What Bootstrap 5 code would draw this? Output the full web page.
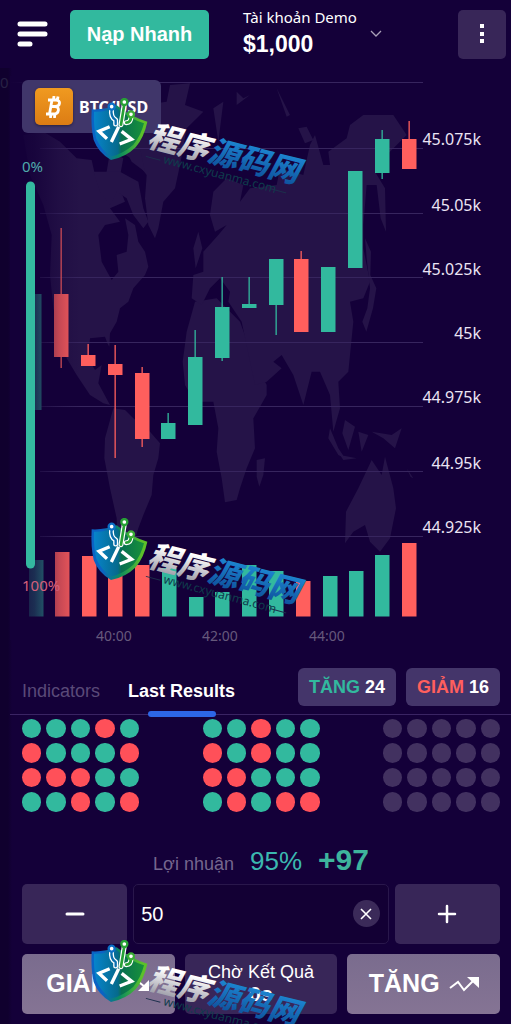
<!DOCTYPE html>
<html lang="vi" data-bs-theme="dark">
<head>
<meta charset="utf-8">
<meta name="viewport" content="width=device-width, initial-scale=1">
<title>BTC/USD</title>
<link href="https://cdn.jsdelivr.net/npm/bootstrap@5.3.0/dist/css/bootstrap.min.css" rel="stylesheet">
<style>
  :root { --up:#32b99e; --down:#ff5f5d; --ink:#140039; --panel:#382658; --edge:#10002e; }
  body { background:var(--ink); color:#fff; font-family:"Liberation Sans",Arial,sans-serif; }
  .trade-page { position:relative; overflow:hidden; }
  .top-bar { height:68px; padding:0 5px 0 17px; }
  .menu-btn { width:32px; }
  .deposit-btn { width:139px; height:49px; margin-left:21px; background:var(--up); font-size:20px; border-radius:5px; }
  .account-btn { width:139px; margin-left:34px; }
  .account-name { font:15px/20px "Noto Sans",sans-serif; }
  .account-sum { font-size:23px; line-height:34px; }
  .more-btn { width:48px; height:49px; background:var(--panel); border-radius:5px; }
  .work-area { background:linear-gradient(90deg,var(--edge) 8px,var(--ink) 12px); }
  .chart-svg { display:block; width:100%; height:auto; }
  .axis-y { font:16px "Noto Sans",sans-serif; fill:#ebe4f4; text-anchor:end; }
  .axis-x { font:14px "Noto Sans",sans-serif; fill:#66597c; text-anchor:middle; }
  .gauge-text { font:15px "Noto Sans",sans-serif; }
  .asset-chip { top:12px; left:22px; width:139px; height:53px; padding:0 13px; gap:6px; background:#40366a; border-radius:6px; font:bold 16px "Noto Sans",sans-serif; }
  .coin { width:38px; height:37px; border-radius:5px; background:linear-gradient(#f09a20,#dc7c14); box-shadow:0 1px 3px #0006; }
  .tab-row { padding:8px 11px 0 12px; margin-left:10px; height:55px; border-bottom:1px solid #3a2463; font-size:18px; }
  .tab-link { color:#5a4a78; text-decoration:none; line-height:46px; }
  .tab-link.active { color:#fff; font-weight:bold; position:relative; margin-left:28px; }
  .tab-link.active::after { content:""; position:absolute; left:20px; right:19px; bottom:-3px; height:6px; border-radius:3px; background:#2d66e6; }
  .tally { height:38px; padding:0 11px; background:#44356a; border-radius:6px; font-weight:bold; }
  .tally + .tally { margin-left:10px; }
  .text-up { color:var(--up); } .text-down { color:var(--down); }
  .inner { padding:0 11px 0 22px; }
  .result-set { display:grid; grid-template-columns:repeat(5,1fr); gap:5px; width:117px; }
  .result-set i { aspect-ratio:1; border-radius:50%; background:#423160; }
  .result-set .u { background:var(--up); } .result-set .d { background:#ff5059; }
  .profit-row { margin-top:25px; height:40px; }
  .profit-label { font-size:18px; color:#75678e; }
  .profit-rate { font-size:26px; color:#3bb8b0; }
  .profit-sum { font-size:30px; color:#3eb49c; font-weight:bold; }
  .stake-row { gap:6px; margin-top:7px; }
  .step-btn { flex:108 1 0; height:60px; background:var(--panel); border-radius:5px; }
  .stake-box { flex:252 1 0; height:60px; border:1px solid #29174b; border-radius:5px; background:#130034; padding-right:8px; }
  .stake-input { font-size:20px; padding:0 0 0 7px; color:#fff; }
  .clear-btn { width:27px; height:27px; background:#3b2a59; }
  .order-row { gap:10px; margin-top:10px; padding-bottom:10px; }
  .order-row > * { flex:1 1 0; height:60px; border-radius:5px; }
  .order-btn { background:linear-gradient(#7a6c8e,#857494); font-size:25px; gap:9px; }
  .wait-box { background:var(--panel); font-size:18px; line-height:20px; }
  .wait-box strong { font-size:21px; line-height:24px; }
  .stamp-layer { inset:0; overflow:hidden; pointer-events:none; z-index:5; }
  .stamp { position:absolute; left:90px; width:220px; height:100px; }
  .stamp-a { top:98px; } .stamp-b { top:518px; } .stamp-c { top:940px; }
  .stamp-name { font:italic 900 31px "Noto Sans CJK SC",sans-serif; }
  .stamp-url { font:12px "Noto Sans",sans-serif; fill:#0f3c4c; }
</style>
</head>
<body>
<div class="trade-page">
  <header class="top-bar d-flex align-items-center">
    <button class="btn border-0 p-0 menu-btn d-flex" aria-label="Menu">
      <svg width="32" height="26" stroke="#fff" stroke-width="5" stroke-linecap="round"><path d="M3 3H28M3 13H28M3 23H13"/></svg>
    </button>
    <button class="btn border-0 p-0 deposit-btn text-white fw-bold">Nạp Nhanh</button>
    <button class="btn border-0 p-0 account-btn d-flex align-items-center justify-content-between text-start text-white">
      <span><span class="account-name d-block">Tài khoản Demo</span><strong class="account-sum d-block">$1,000</strong></span>
      <svg width="12" height="8" fill="none" stroke="#aaa0b8" stroke-width="1.3"><path d="M1 1L6 6L11 1"/></svg>
    </button>
    <button class="btn border-0 p-0 more-btn ms-auto d-flex align-items-center justify-content-center" aria-label="More">
      <svg width="4" height="20" fill="#fff"><path d="M0 0h4v4h-4zM0 8h4v4h-4zM0 15h4v4h-4z"/></svg>
    </button>
  </header>

  <main class="work-area">
    <section class="position-relative">
      <svg class="chart-svg" viewBox="0 68 511 592" role="img" aria-label="BTC/USD">
        <defs>
          <linearGradient id="fade" gradientUnits="userSpaceOnUse" x1="10" x2="80" y1="0" y2="0">
            <stop offset="0" stop-color="#140039"/><stop offset=".35" stop-color="#140039" stop-opacity=".75"/>
            <stop offset=".7" stop-color="#140039" stop-opacity=".25"/><stop offset="1" stop-color="#140039" stop-opacity="0"/>
          </linearGradient>
        </defs>
        <g fill="#251348" transform="translate(10 75) scale(.33333)">
          <path d="M40 180L100 170 150 200 200 250 245 255 255 300 290 290 300 230 340 250 325 330 345 380 300 400 330 440 285 450 265 480 275 560 305 615 325 590 320 540 350 530 355 480 345 430 375 450 385 500 405 530 415 575 405 600 370 640 355 680 330 700 320 740 300 775 298 815 292 805 285 785 240 790 235 850 255 885 275 870 265 925 300 990 280 985 240 960 200 900 170 850 150 780 130 700 120 600 125 480 100 390 60 300Z"/>
          <path d="M385 150L400 90 470 80 480 30 540 25 525 90 580 110 530 160 510 270 495 340 460 380 445 460 435 490 415 450 405 370 410 300 380 260 330 230Z"/>
          <path d="M250 290L330 290 385 320 400 400 415 440 400 460 370 420 350 370 320 350 300 390 270 350ZM340 210l50 10 15 70-40-30z"/>
          <path d="M310 1000L345 1005 370 1030 420 1070 450 1105 445 1150 430 1200 425 1260 400 1320 385 1360 370 1410 340 1500 325 1450 320 1330 300 1240 283 1150 285 1090Z"/>
          <path d="M555 680L620 670 690 740 730 850 770 930 770 960 730 1030 735 1120 710 1180 690 1240 680 1275 645 1282 635 1210 620 1130 625 1060 610 980 555 980 525 930 518 860 530 770Z"/>
          <path d="M740 1155l25-5-5 50-12 35-8-30z"/>
          <path d="M545 670L550 600 580 590 580 530 625 480 650 450 615 470 600 420 610 350 650 310 700 330 690 380 720 340 800 330 810 280 880 300 900 210 915 180 940 270 960 270 955 230 1010 190 1020 150 1060 120 1150 120 1190 180 1160 210 1130 240 1095 290 1125 340 1128 470 1112 430 1100 330 1070 330 1060 450 1060 520 1080 620 1060 670 1020 680 1030 740 1015 890 985 920 990 1000 970 1070 960 960 930 890 905 890 880 990 850 900 815 840 790 860 815 880 770 920 735 930 695 740 655 680 660 650 630 610 600 640 575 690Z"/>
          <path d="M550 520l15-50 12 50-20 60zM1065 490l18 40-2 70 18 40-10 60-20 70-12-30 15-40 8-60-10-90zM610 100l30-20-15 120zM680 50l20 20 20-10-40 30zM800 40l40 80-10 5zM865 160l25-5 20 40-25 10z"/>
          <path d="M1085 1155L1115 1200 1125 1145 1150 1240 1158 1300 1140 1390 1110 1430 1080 1400 1065 1350 1030 1370 1005 1405 1008 1310 1045 1240Z"/>
          <path d="M960 1060l25 60 20 30-20-10-30-50zM1005 1035l30 20-20 70-18-50zM1045 1070l30 10-20 50zM1085 1070l60 10 30-20-20 60-35-30zM990 1140l50 10-40 5zM1190 1180l20 30-8-4z"/>
        </g>
        <path stroke="#37255e" stroke-width="1" d="M10 82.5H423M40 148.500H423M40 213.500H423M40 277.500H423M40 342.500H423M40 406.500H423M40 471.500H423M40 536.500H423"/>
        <g id="bars"></g>
        <path fill="url(#fade)" d="M10 76H80V640H10Z"/>
        <g class="axis-y">
          <text x="481" y="145">45.075k</text><text x="481" y="211">45.05k</text><text x="481" y="275">45.025k</text>
          <text x="481" y="339">45k</text><text x="481" y="403">44.975k</text><text x="481" y="469">44.95k</text><text x="481" y="533">44.925k</text>
        </g>
        <g class="axis-x"><text x="114" y="641">40:00</text><text x="220" y="641">42:00</text><text x="327" y="641">44:00</text></g>
        <g class="gauge-text"><text x="22" y="172" fill="#4fa9ab">0%</text><text x="22" y="591" fill="#d4607c">100%</text><text x="0" y="88" fill="#272044">0</text></g>
        <path stroke="#34b9a0" stroke-width="9" stroke-linecap="round" d="M30.500 186V564"/>
      </svg>
      <button class="btn border-0 asset-chip position-absolute d-flex align-items-center text-white">
        <span class="coin d-flex flex-shrink-0 align-items-center justify-content-center">
          <svg width="18" height="22" viewBox="0 0 18 22" fill="none" stroke="#fff" stroke-width="2.800"><path d="M3 4H7L4.500 18H1M6 4h5c5 0 4.500 6-.5 6.500H6M10 10.500c5 0 4.500 7.500-1.500 7.500H3.500M9 0l-.6 4M13 .5l-.6 4M6 18l-.6 4M10 18l-.6 4"/></svg>
        </span>BTC/USD
      </button>
    </section>

    <nav class="tab-row d-flex align-items-start">
      <a class="tab-link" href="#">Indicators</a>
      <a class="tab-link active" href="#">Last Results</a>
      <span class="tally ms-auto d-flex align-items-center"><span><span class="text-up">TĂNG</span> 24</span></span>
      <span class="tally d-flex align-items-center"><span><span class="text-down">GIẢM</span> 16</span></span>
    </nav>

    <div class="inner">
      <div class="d-flex justify-content-between pt-1" id="results"></div>

      <div class="profit-row d-flex align-items-baseline justify-content-center">
        <span class="profit-label">Lợi nhuận</span>
        <span class="profit-rate ms-3">95%</span>
        <span class="profit-sum ms-3">+97</span>
      </div>

      <div class="stake-row d-flex">
        <button class="btn border-0 p-0 step-btn" aria-label="Giảm 1"><svg width="20" height="20" stroke="#fff" stroke-width="3" stroke-linecap="round"><path d="M2 10H18"/></svg></button>
        <div class="stake-box d-flex align-items-center">
          <input class="form-control border-0 bg-transparent shadow-none stake-input" type="text" value="50" aria-label="50">
          <button class="btn border-0 p-0 rounded-circle clear-btn d-flex align-items-center justify-content-center flex-shrink-0" aria-label="Xóa"><svg width="12" height="12" stroke="#fff" stroke-width="1.600"><path d="M1 1L11 11M11 1L1 11"/></svg></button>
        </div>
        <button class="btn border-0 p-0 step-btn" aria-label="Thêm 1"><svg width="20" height="20" stroke="#fff" stroke-width="2.500" stroke-linecap="round"><path d="M2 10H18M10 2V18"/></svg></button>
      </div>

      <div class="order-row d-flex">
        <button class="btn border-0 p-0 order-btn d-flex align-items-center justify-content-center text-white fw-bold">GIẢM
          <svg width="30" height="16" fill="none" stroke="#fff" stroke-width="2"><path d="M1 5L9 11L15 3L25 11"/><path fill="#fff" stroke="none" d="M29 15H18L29 4Z"/></svg></button>
        <div class="wait-box d-flex flex-column align-items-center justify-content-center"><span>Chờ Kết Quả</span><strong>0s</strong></div>
        <button class="btn border-0 p-0 order-btn d-flex align-items-center justify-content-center text-white fw-bold">TĂNG
          <svg width="30" height="16" fill="none" stroke="#fff" stroke-width="2"><path d="M1 12L9 6L15 14L25 4"/><path fill="#fff" stroke="none" d="M18 1H30V12Z"/></svg></button>
      </div>
    </div>
  </main>

  <div class="stamp-layer position-absolute" id="stamps"></div>
</div>

<svg width="0" height="0" class="position-absolute" aria-hidden="true">
  <defs>
    <linearGradient id="shieldRim" x1="0" x2="1"><stop offset=".2" stop-color="#0b63c4"/><stop offset=".5" stop-color="#0a8a60"/><stop offset=".9" stop-color="#5cc02a"/></linearGradient>
    <linearGradient id="shieldFace" x1="0" x2="1"><stop stop-color="#0784cc"/><stop offset=".48" stop-color="#066a8c"/><stop offset=".55" stop-color="#087050"/><stop offset="1" stop-color="#17913a"/></linearGradient>
    <linearGradient id="silver" x1="0" x2="0" y1="0" y2="1"><stop offset=".3" stop-color="#fff"/><stop offset=".9" stop-color="#9a9aa6"/></linearGradient>
    <linearGradient id="azure" x1="0" x2="0" y1="0" y2="1"><stop offset=".2" stop-color="#1d86d2"/><stop offset="1" stop-color="#0c4a94"/></linearGradient>
  </defs>
</svg>
<template id="stampArt">
  <svg class="stamp" viewBox="0 0 220 100">
    <g transform="translate(-5 -8) scale(.33333)" fill="none" stroke-linecap="round" stroke-linejoin="round">
      <path fill="url(#shieldRim)" d="M20 58Q60 60 95 46Q140 82 187 95Q178 140 152 172Q122 202 78 210Q40 188 26 150Q17 110 20 58Z"/>
      <path fill="url(#shieldFace)" d="M27 65Q62 66 94 54Q135 87 177 100Q168 136 145 164Q116 190 80 199Q48 180 34 146Q25 110 27 65Z"/>
      <path stroke="#fff" stroke-width="15" d="M80 55Q76 82 92 90V102M118 42L108 104M138 78Q138 98 124 98"/>
      <path stroke="#0a6fb0" stroke-width="7" d="M80 55Q76 82 92 90V102"/>
      <path stroke="#27a035" stroke-width="8" d="M118 42L108 104M138 78Q138 98 124 98"/>
      <circle cx="80" cy="50" r="9" fill="#fff" stroke="#0b6fc6" stroke-width="7"/>
      <circle cx="118" cy="36" r="9" fill="#fff" stroke="#27a035" stroke-width="7"/>
      <circle cx="138" cy="73" r="9" fill="#fff" stroke="#3aad35" stroke-width="7"/>
      <path stroke="#fff" stroke-width="10" stroke-linecap="butt" stroke-linejoin="miter" d="M74 110L42 124L66 146M101 110L79 156M110 124L140 148L104 162"/>
    </g>
    <g transform="rotate(14 57 48)" class="stamp-name"><text x="56" y="48" fill="url(#silver)">程序</text><text x="118" y="48" fill="url(#azure)">源码网</text></g>
    <g transform="rotate(15 73 64)"><text class="stamp-url" x="73" y="65">www.cxyuanma.com</text><path stroke="#1d2f4c" d="M55 63H70M184 62H200"/></g>
  </svg>
</template>

<script src="https://cdn.jsdelivr.net/npm/bootstrap@5.3.0/dist/js/bootstrap.bundle.min.js"></script>
<script>
  // candle: left, direction, body top, body bottom, wick top, wick bottom
  const candles = [
    [27,'u',294,410,294,410],[54,'d',294,357,228,368],[81,'d',355,366,344,366],[108,'d',364,375,345,458],
    [135,'d',373,439,367,447],[161,'u',423,439,413,439],[188,'u',357,425,330,425],[215,'u',307,358,277,361],
    [242,'u',304,308,277,308],[269,'u',259,305,259,335],[294,'d',259,332,251,332],[321,'u',267,332,267,332],
    [348,'u',171,268,171,268],[375,'u',139,173,130,179],[402,'d',139,169,121,169]];
  // volume: left, direction, top
  const volumes = [[29,'u',560],[55,'d',552],[82,'d',556],[108,'d',568],[135,'d',565],[162,'u',568],[189,'u',597],
    [215,'u',592],[242,'u',565],[269,'u',571],[296,'d',581],[323,'u',576],[349,'u',571],[375,'u',555],[402,'d',543]];
  const tint = { u:'#32b99e', d:'#ff5f5d' };
  document.getElementById('bars').innerHTML =
    candles.map(([x,k,t,b,wt,wb]) => `<path fill="${tint[k]}" d="M${x} ${t}h14.500V${b}h-14.500ZM${x+6.5} ${wt}h1.300V${wb}h-1.300Z"/>`).join('') +
    volumes.map(([x,k,t]) => `<path fill="${tint[k]}" d="M${x} ${t}h14.500V616.500h-14.500Z"/>`).join('');

  // three boards of 4 rows by 5: u = up, d = down, . = not played yet
  const boards = ['uuudu' + 'duuud' + 'ddduu' + 'uudud', 'uuduu' + 'duduu' + 'dduuu' + 'ududd', '.'.repeat(20)];
  document.getElementById('results').innerHTML = boards.map(s =>
    `<div class="result-set">${[...s].map(c => `<i class="${c === '.' ? '' : c}"></i>`).join('')}</div>`).join('');

  for (const name of ['stamp-a','stamp-b','stamp-c']) {
    const art = document.getElementById('stampArt').content.cloneNode(true);
    art.firstElementChild.classList.add(name);
    document.getElementById('stamps').append(art);
  }
</script>
</body>
</html>
